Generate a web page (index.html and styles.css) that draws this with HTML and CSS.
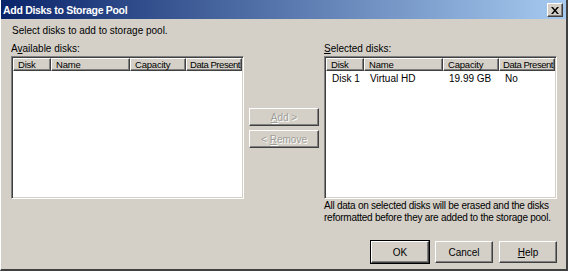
FILE: index.html
```html
<!doctype html>
<html>
  <head>
    <title>Add Disks to Storage Pool</title>
    <meta charset="utf-8">
    <link rel="stylesheet" href="styles.css">
  </head>
  <body>
    <div class="window">
      <div class="titlebar">
        <span class="title">Add Disks to Storage Pool</span>
        <button class="close" aria-label="Close">
          <svg width="8" height="7" viewBox="0 0 8 7"><path d="M0 0h2l2 2.5L6 0h2L5 3.5 8 7H6L4 4.5 2 7H0l3-3.5z" fill="#000"/></svg>
        </button>
      </div>
      <div class="content">
        <p class="intro">Select disks to add to storage pool.</p>
        <div class="lists">
          <div class="block">
            <label class="caption">A<u>v</u>ailable disks:</label>
            <div class="listview">
              <div class="head">
                <span class="c-disk">Disk</span>
                <span class="c-name">Name</span>
                <span class="c-cap">Capacity</span>
                <span class="c-data">Data Present</span>
              </div>
            </div>
          </div>
          <div class="movers">
            <button class="btn" disabled><u>A</u>dd &gt;</button>
            <button class="btn" disabled>&lt; <u>R</u>emove</button>
          </div>
          <div class="block">
            <label class="caption"><u>S</u>elected disks:</label>
            <div class="listview">
              <div class="head">
                <span class="c-disk">Disk</span>
                <span class="c-name">Name</span>
                <span class="c-cap">Capacity</span>
                <span class="c-data">Data Present</span>
              </div>
              <div class="row">
                <span class="c-disk">Disk 1</span>
                <span class="c-name">Virtual HD</span>
                <span class="c-cap">19.99 GB</span>
                <span class="c-data">No</span>
              </div>
            </div>
            <p class="warning">All data on selected disks will be erased and the disks reformatted before they are added to the storage pool.</p>
          </div>
        </div>
        <div class="actions">
          <button class="btn default">OK</button>
          <button class="btn">Cancel</button>
          <button class="btn"><u>H</u>elp</button>
        </div>
      </div>
    </div>
  </body>
</html>
```

FILE: styles.css
```css
html, body {
  margin: 0;
  padding: 0;
  background: #d4d0c8;
}
.window {
  width: 568px;
  height: 271px;
  box-sizing: border-box;
  background: #d4d0c8;
  border-right: 2px solid #404040;
  border-bottom: 2px solid #404040;
  border-left: 1px solid #fff;
  font-family: "Liberation Sans", Arial, sans-serif;
  font-size: 10px;
  color: #000;
  display: flex;
  flex-direction: column;
}
.titlebar {
  height: 19px;
  flex: none;
  display: flex;
  align-items: center;
  justify-content: space-between;
  padding: 0 3px 0 2px;
  background: linear-gradient(to right, #0a246a, #a6caf0);
}
.title {
  color: #fff;
  font-weight: bold;
  font-size: 10.5px;
  letter-spacing: -0.3px;
}
.close {
  width: 16px;
  height: 14px;
  padding: 0;
  margin-top: 1px;
  background: #d4d0c8;
  border: 1px solid;
  border-color: #fff #404040 #404040 #fff;
  box-shadow: inset -1px -1px 0 #808080;
  display: flex;
  align-items: center;
  justify-content: center;
}
.content {
  flex: 1;
  padding: 5px 8px 0 10px;
  display: flex;
  flex-direction: column;
}
.intro {
  margin: 0 0 5px 1px;
  height: 13px;
  line-height: 13px;
  white-space: nowrap;
}
.lists {
  flex: none;
  display: flex;
  gap: 5px;
  height: 193px;
}
.block {
  width: 233px;
  flex: none;
  display: flex;
  flex-direction: column;
}
.caption {
  height: 13px;
  line-height: 13px;
  margin-bottom: 1px;
}
.listview {
  height: 143px;
  flex: none;
  box-sizing: border-box;
  background: #fff;
  border: 1px solid;
  border-color: #808080 #fff #fff #808080;
  box-shadow: inset 1px 1px 0 #404040, inset -1px -1px 0 #d4d0c8;
  padding: 1px;
}
.head, .row {
  display: flex;
  white-space: nowrap;
}
.head span {
  height: 13px;
  line-height: 11px;
  box-sizing: border-box;
  padding-left: 4px;
  font-size: 9.5px;
  letter-spacing: -0.2px;
  background: #d4d0c8;
  border: 1px solid;
  border-color: #fff #404040 #404040 #fff;
  box-shadow: inset -1px -1px 0 #808080;
  overflow: hidden;
}
.head .c-data {
  padding-left: 3px;
  letter-spacing: -0.45px;
}
.row span {
  height: 15px;
  line-height: 15px;
  padding-left: 6px;
  box-sizing: border-box;
}
.c-disk { width: 38px; }
.c-name { width: 79px; }
.c-cap { width: 56px; }
.c-data { width: 56px; }
.movers {
  width: 70px;
  flex: none;
  display: flex;
  flex-direction: column;
  gap: 4px;
  padding-top: 66px;
}
.btn {
  font: inherit;
  height: 18px;
  padding: 0;
  background: #d4d0c8;
  color: #000;
  border: 1px solid;
  border-color: #fff #404040 #404040 #fff;
  box-shadow: inset -1px -1px 0 #808080;
}
.btn:disabled {
  color: #a09e98;
  text-shadow: 1px 1px 0 #fff;
}
.warning {
  margin: 1px 0 0 0;
  line-height: 12px;
  letter-spacing: -0.25px;
}
.actions {
  display: flex;
  justify-content: flex-end;
  gap: 6px;
  margin-top: 6px;
  padding-right: 1px;
}
.actions .btn {
  width: 58px;
  height: 22px;
}
.actions .default {
  outline: 1px solid #000;
  outline-offset: 0;
}
```
